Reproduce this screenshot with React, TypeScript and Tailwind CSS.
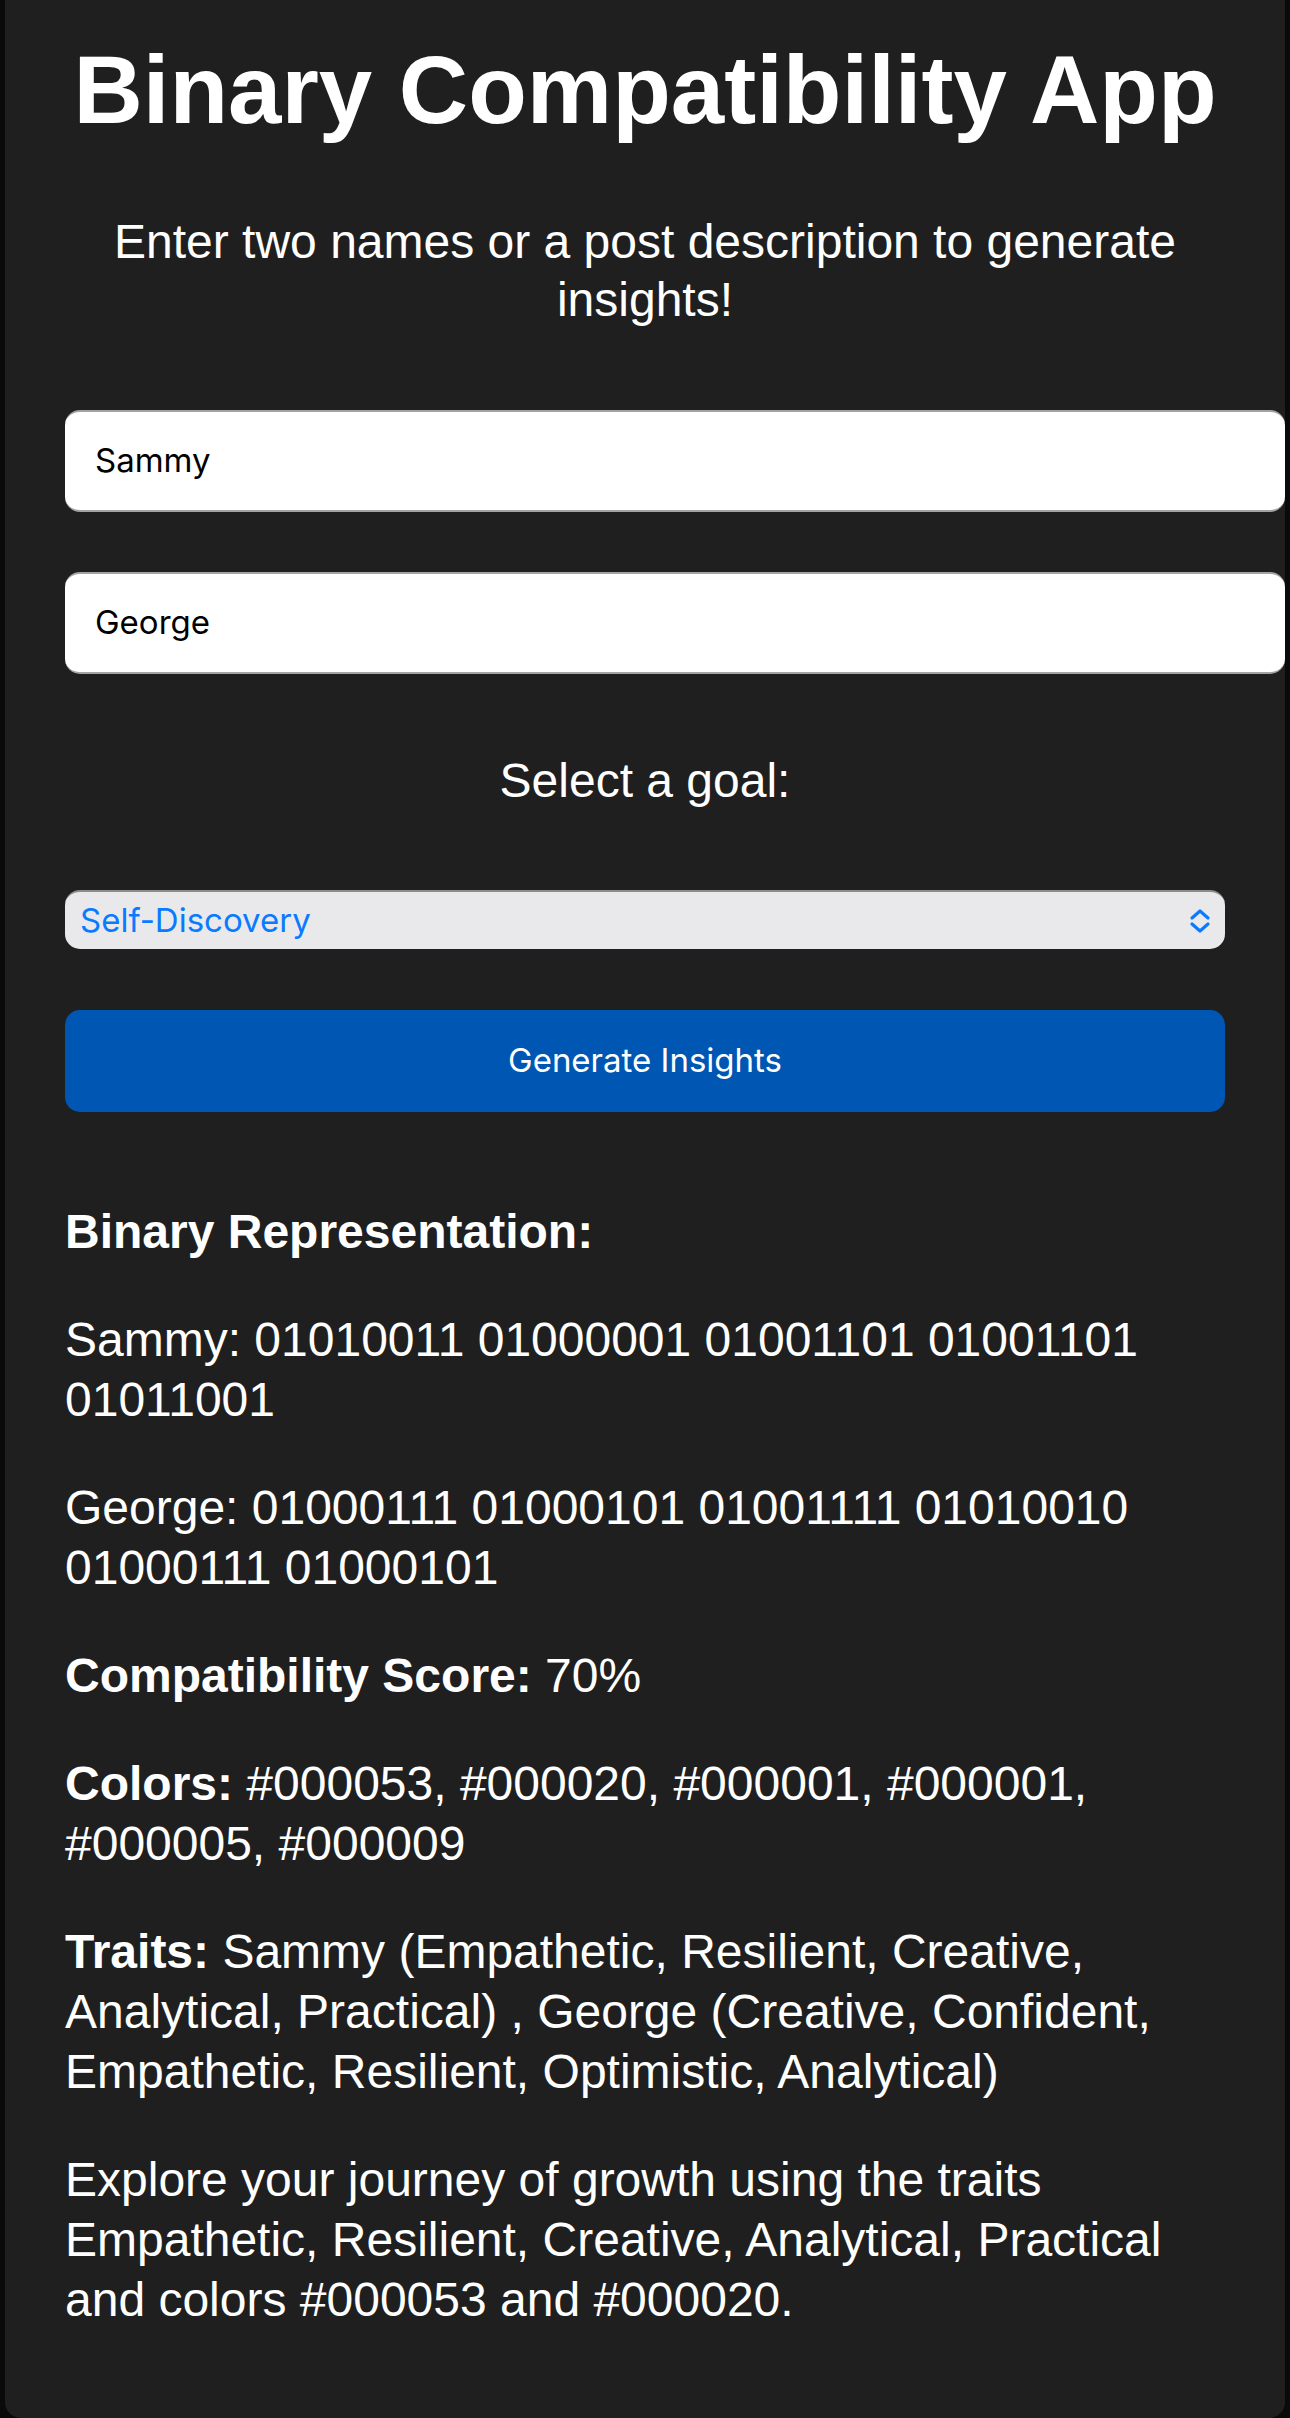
import React from "react";

const bodyFont = { fontFamily: '"Liberation Sans", Arial, Helvetica, sans-serif' };

function UpDownChevron() {
  return (
    <svg width="22" height="26" viewBox="0 0 22 26" fill="none" className="shrink-0">
      <path
        d="M3 10 L11 3 L19 10"
        stroke="#0a7aff"
        strokeWidth="3.2"
        strokeLinecap="round"
        strokeLinejoin="round"
      />
      <path
        d="M3 16 L11 23 L19 16"
        stroke="#0a7aff"
        strokeWidth="3.2"
        strokeLinecap="round"
        strokeLinejoin="round"
      />
    </svg>
  );
}

function NameInput({ value, className }: { value: string; className?: string }) {
  return (
    <div
      className={`w-[1220px] h-[102px] shrink-0 bg-white rounded-[15px] border-y-2 border-[#a3a3a3] flex items-center pl-[30px] font-['Inter',sans-serif] text-[33px] text-black ${className ?? ""}`}
    >
      {value}
    </div>
  );
}

const results = [
  { label: "", text: "Sammy: 01010011 01000001 01001101 01001101 01011001" },
  { label: "", text: "George: 01000111 01000101 01001111 01010010 01000111 01000101" },
  { label: "Compatibility Score:", text: "70%" },
  { label: "Colors:", text: "#000053, #000020, #000001, #000001, #000005, #000009" },
  {
    label: "Traits:",
    text: "Sammy (Empathetic, Resilient, Creative, Analytical, Practical) , George (Creative, Confident, Empathetic, Resilient, Optimistic, Analytical)",
  },
  {
    label: "",
    text: "Explore your journey of growth using the traits Empathetic, Resilient, Creative, Analytical, Practical and colors #000053 and #000020.",
  },
];

export default function App() {
  return (
    <div className="w-[1290px] min-h-[2418px] bg-[#0a0a0a] flex" style={bodyFont}>
      <div className="mx-[5px] w-[1280px] min-h-[2418px] bg-[#1f1f1f] rounded-b-[16px] overflow-hidden text-white px-[60px] pt-[35px] flex flex-col">
        <h1 className="text-[96px] leading-[110px] font-bold text-center whitespace-nowrap">
          Binary Compatibility App
        </h1>
        <p className="mt-[68px] text-[48px] leading-[58px] text-center px-[10px]">
          Enter two names or a post description to generate insights!
        </p>

        <NameInput value="Sammy" className="mt-[81px]" />
        <NameInput value="George" className="mt-[60px]" />

        <p className="mt-[78px] text-[48px] leading-[58px] text-center">Select a goal:</p>

        <div className="mt-[80px] h-[59px] bg-[#e9e9eb] rounded-[15px] border-t-2 border-[#8c8c8c] flex items-center justify-between pl-[15px] pr-[14px]">
          <span className="font-['Inter',sans-serif] text-[33px] text-[#0a7aff]">
            Self-Discovery
          </span>
          <UpDownChevron />
        </div>

        <div className="mt-[61px] h-[102px] bg-[#0056b3] rounded-[15px] flex items-center justify-center">
          <span className="font-['Inter',sans-serif] text-[33px] text-white">
            Generate Insights
          </span>
        </div>

        <div className="mt-[90px] flex flex-col gap-[48px] text-[48px] leading-[60px] pb-[80px]">
          <p className="font-bold">Binary Representation:</p>
          {results.map((r, i) =>
            r.label ? (
              <p key={i}>
                <strong className="font-bold">{r.label} </strong>
                <span>{r.text}</span>
              </p>
            ) : (
              <p key={i}>{r.text}</p>
            )
          )}
        </div>
      </div>
    </div>
  );
}
